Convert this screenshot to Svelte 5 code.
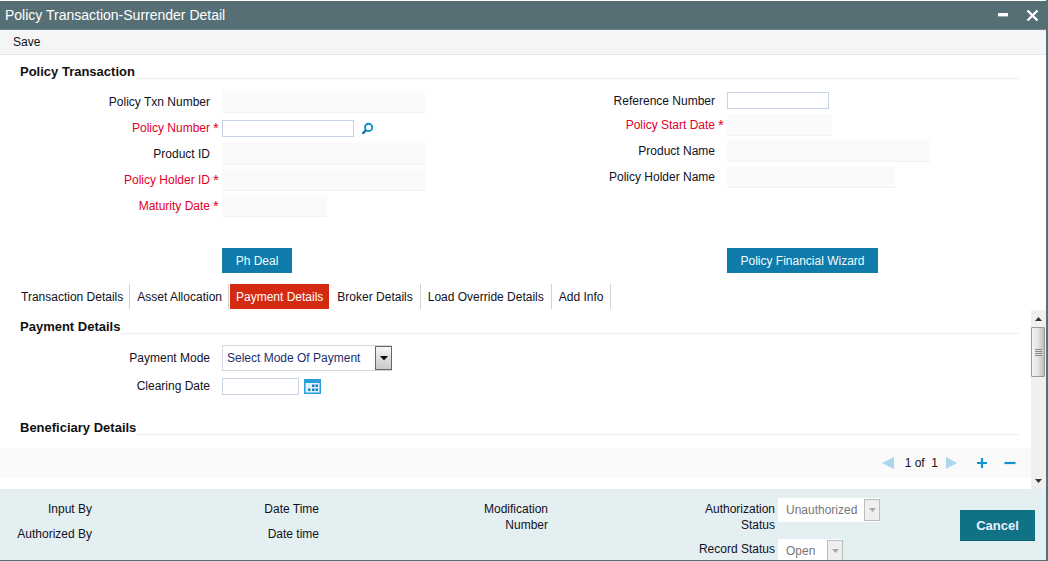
<script>
  const leftRows = [
    { label: 'Policy Txn Number', kind: 'ro', w: 'w202', h: 'r26' },
    { label: 'Policy Number', req: true, kind: 'lookup', h: 'r26' },
    { label: 'Product ID', kind: 'ro', w: 'w202', h: 'r26' },
    { label: 'Policy Holder ID', req: true, kind: 'ro', w: 'w202', h: 'r26' },
    { label: 'Maturity Date', req: true, kind: 'ro', w: 'w104', h: 'r26' }
  ];
  const rightRows = [
    { label: 'Reference Number', kind: 'input', h: 'r23' },
    { label: 'Policy Start Date', req: true, kind: 'ro', w: 'w104', h: 'r26' },
    { label: 'Product Name', kind: 'ro', w: 'w202', h: 'r26' },
    { label: 'Policy Holder Name', kind: 'ro', w: 'w167', h: 'r26' }
  ];
  const tabs = ['Transaction Details', 'Asset Allocation', 'Payment Details', 'Broker Details', 'Load Override Details', 'Add Info'];
</script>

<div class="window">
  <header class="title">
    <span>Policy Transaction-Surrender Detail</span>
    <div class="winbtns">
      <svg width="10" height="4" viewBox="0 0 10 4"><rect width="10" height="3.4" fill="#fff" /></svg>
      <svg width="13" height="13" viewBox="0 0 13 13"><path d="M1.5 1.5l10 10M11.5 1.5l-10 10" stroke="#fff" stroke-width="2.4" /></svg>
    </div>
  </header>
  <div class="toolbar"><span class="save">Save</span></div>

  <main class="main">
    <div class="section first"><h2>Policy Transaction</h2><i></i></div>
    <div class="columns">
      <div class="col left">
        {#each leftRows as r}
          <div class="row {r.h}">
            <label class="lbl" class:red={r.req}>{r.label}</label>
            <span class="star">{r.req ? '*' : ''}</span>
            {#if r.kind === 'ro'}
              <span class="ro {r.w}"></span>
            {:else}
              <span class="inp w132"></span>
              <svg class="lens" width="13" height="13" viewBox="0 0 13 13"><circle cx="7.6" cy="5.4" r="3.6" fill="none" stroke="#0f8fc7" stroke-width="1.9" /><path d="M5 8.2L1.5 11.8" stroke="#0b6f9f" stroke-width="2.2" /></svg>
            {/if}
          </div>
        {/each}
      </div>
      <div class="col right">
        {#each rightRows as r}
          <div class="row {r.h}">
            <label class="lbl" class:red={r.req}>{r.label}</label>
            <span class="star">{r.req ? '*' : ''}</span>
            {#if r.kind === 'ro'}
              <span class="ro {r.w}"></span>
            {:else}
              <span class="inp w102"></span>
            {/if}
          </div>
        {/each}
      </div>
    </div>

    <div class="actions">
      <div class="actcol a1"><button class="blue b1">Ph Deal</button></div>
      <div class="actcol a2"><button class="blue b2">Policy Financial Wizard</button></div>
    </div>

    <nav class="tabs">
      {#each tabs as t}
        <span class="tab" class:active={t === 'Payment Details'}>{t}</span>
      {/each}
    </nav>

    <div class="scroller">
      <div class="content">
        <div class="section"><h2>Payment Details</h2><i></i></div>
        <div class="row r28 pm">
          <label class="lbl">Payment Mode</label>
          <span class="star"></span>
          <span class="select">
            <span class="val">Select Mode Of Payment</span>
            <span class="arrow"><svg width="8" height="5" viewBox="0 0 8 5"><path d="M0 0h8L4 4.500z" fill="#111" /></svg></span>
          </span>
        </div>
        <div class="row r28">
          <label class="lbl">Clearing Date</label>
          <span class="star"></span>
          <span class="inp w77"></span>
          <svg class="cal" width="17" height="15" viewBox="0 0 17 15"><rect width="17" height="15" fill="#2a9fdc" /><rect x="1.500" y="4" width="14" height="9.500" fill="#dff1fb" /><g fill="#1a7fb8"><rect x="8" y="5.500" width="2.500" height="2.500" /><rect x="11.500" y="5.500" width="2.500" height="2.500" /><rect x="4" y="9.500" width="2.500" height="2.500" /><rect x="8" y="9.500" width="2.500" height="2.500" /><rect x="11.500" y="9.500" width="2.500" height="2.500" /></g></svg>
        </div>
        <div class="section ben"><h2>Beneficiary Details</h2><i></i></div>
        <div class="pager">
          <svg width="13" height="12" viewBox="0 0 13 12"><path d="M12 0v12L0 6z" fill="#a9d8ee" /></svg>
          <span class="count">1 of &nbsp;1</span>
          <svg width="11" height="12" viewBox="0 0 11 12"><path d="M0 0v12L11 6z" fill="#a9d8ee" /></svg>
          <svg class="plus" width="12" height="12" viewBox="0 0 12 12"><path d="M6 1v10M1 6h10" stroke="#0f94d2" stroke-width="2.200" /></svg>
          <svg class="minus" width="12" height="12" viewBox="0 0 12 12"><path d="M0.500 6h11" stroke="#0f94d2" stroke-width="2.200" /></svg>
        </div>
      </div>
      <div class="scrollbar">
        <span class="sbtn"><svg width="7" height="4" viewBox="0 0 7 4"><path d="M3.500 0L7 4H0z" fill="#333" /></svg></span>
        <span class="thumb"><svg width="7" height="7" viewBox="0 0 7 7"><path d="M0 .500h7M0 2.500h7M0 4.500h7M0 6.500h7" stroke="#888" /></svg></span>
        <span class="track"></span>
        <span class="sbtn"><svg width="7" height="4" viewBox="0 0 7 4"><path d="M0 0h7L3.500 4z" fill="#333" /></svg></span>
      </div>
    </div>
  </main>

  <footer class="footer">
    <div class="fcol c1"><span>Input By</span><span>Authorized By</span></div>
    <div class="fcol c2"><span>Date Time</span><span>Date time</span></div>
    <div class="fcol c3"><span class="two">Modification<br />Number</span></div>
    <div class="status">
      <div class="srow s1">
        <span class="slabel">Authorization<br />Status</span>
        <span class="fsel u"><span>Unauthorized</span><b><svg width="7" height="4" viewBox="0 0 7 4"><path d="M0 0h7L3.500 4z" fill="#aaa" /></svg></b></span>
      </div>
      <div class="srow s2">
        <span class="slabel">Record Status</span>
        <span class="fsel o"><span>Open</span><b><svg width="7" height="4" viewBox="0 0 7 4"><path d="M0 0h7L3.500 4z" fill="#aaa" /></svg></b></span>
      </div>
    </div>
    <button class="cancel">Cancel</button>
  </footer>
</div>

<style>
  :global(body) { margin: 0; background: #fff; }
  .window {
    width: 1048px; height: 561px; box-sizing: border-box; overflow: hidden;
    display: flex; flex-direction: column; padding-top: 1px;
    border-right: 2px solid #53707a; border-bottom: 1px solid #53707a;
    background: #fff; color: #111122;
    font: 12px/14px "Liberation Sans", Arial, sans-serif;
  }
  .title {
    height: 28px; flex: none; background: #566f75; color: #fff;
    display: flex; align-items: center; justify-content: space-between;
    padding: 0 7px 0 5px; font-size: 14px;
    border-bottom: 1px solid #6d8a90;
  }
  .winbtns { display: flex; align-items: center; gap: 18px; }
  .toolbar {
    height: 25px; flex: none; box-sizing: border-box; background: #f4f5f7;
    border-bottom: 1px solid #e3e6e8; display: flex; align-items: center;
    padding-left: 13px; color: #111;
  }
  .main { flex: 1; min-height: 0; display: flex; flex-direction: column; }
  .section { display: flex; align-items: flex-end; padding-left: 20px; padding-right: 26px; }
  .section h2 { margin: 0; font-size: 13px; line-height: 15px; font-weight: 700; color: #111; }
  .section i { flex: 1; border-bottom: 1px solid #eceef0; margin-bottom: 0; }
  .section.first { margin-top: 9px; }
  .columns { display: flex; margin-top: 10px; height: 135px; }
  .col { display: flex; flex-direction: column; }
  .col.left { width: 505px; }
  .row { display: flex; align-items: center; }
  .r26 { height: 26px; }
  .r23 { height: 23px; }
  .r28 { height: 28px; }
  .lbl { width: 210px; text-align: right; }
  .col.right .lbl { width: 210px; }
  .red { color: #e0002a; }
  .star { width: 12px; padding-left: 3px; box-sizing: border-box; color: #e0002a; font-size: 15px; line-height: 10px; align-self: flex-start; padding-top: 8px; }
  .col.right .star { width: 12px; }
  .ro { height: 22px; background: #fafafa; border-bottom: 1px solid #f2f2f2; box-sizing: border-box; }
  .w202 { width: 203px; }
  .w167 { width: 168px; }
  .w104 { width: 105px; }
  .inp { height: 17px; box-sizing: border-box; background: #fff; border: 1px solid #c6d4e6; }
  .w132 { width: 132px; }
  .w102 { width: 102px; }
  .w77 { width: 77px; }
  .lens { margin-left: 7px; }
  .cal { margin-left: 5px; }
  .actions { display: flex; margin-top: 24px; height: 26px; flex: none; }
  .actcol.a1 { width: 505px; padding-left: 222px; box-sizing: border-box; }
  .actcol.a2 { padding-left: 222px; }
  .blue {
    height: 25px; border: 0; padding: 0; background: #0f7bab; color: #f4fbff;
    font: 12px "Liberation Sans", Arial, sans-serif;
  }
  .b1 { width: 70px; }
  .b2 { width: 151px; }
  .tabs { display: flex; margin-top: 10px; padding-left: 14px; height: 26px; flex: none; }
  .tab { height: 25px; line-height: 27px; padding: 0 7px; border-right: 1px solid #d2d2d2; }
  .tab:nth-child(1) { padding-right: 6px; }
  .tab:nth-child(2) { padding-right: 6px; margin-right: 0; }
  .tab.active { background: #d42a12; color: #fff; border-right: 0; margin-left: 1px; padding: 0 6px; }
  .tab:nth-child(4) { padding: 0 7px 0 8px; }
  .scroller { flex: 1; min-height: 0; display: flex; }
  .content { flex: 1; display: flex; flex-direction: column; position: relative; }
  .content .section { padding-right: 12px; }
  .content .section:first-child { margin-top: 9px; }
  .pm { margin-top: 10px; }
  .pm + .row { margin-top: 0; }
  .select {
    display: flex; width: 170px; height: 26px; box-sizing: border-box;
    border: 1px solid #d3d7dc; align-items: center; color: #1a2f70; padding-left: 4px;
    position: relative; background: #fff;
  }
  .select .val { flex: 1; white-space: nowrap; }
  .arrow {
    position: absolute; right: -1px; top: 0; width: 17px; height: 24px; box-sizing: border-box;
    border: 1px solid #666; background: linear-gradient(#f6f6f6, #c9c9c9);
    display: flex; align-items: center; justify-content: center;
  }
  .ben { margin-top: 20px; }
  .pager {
    height: 30px; flex: none; margin-top: 13px; background: #fafafa; display: flex; align-items: center;
    justify-content: flex-end; padding-right: 15px; color: #111;
  }
  .count { margin: 0 8px 0 10px; white-space: nowrap; }
  .plus { margin-left: 19px; }
  .minus { margin-left: 16px; }
  .scrollbar { width: 15px; flex: none; display: flex; flex-direction: column; background: #f0f0f0; margin-right: 0; }
  .sbtn { height: 17px; flex: none; display: flex; align-items: center; justify-content: center; }
  .thumb {
    height: 50px; flex: none; box-sizing: border-box; margin-right: 1px; width: 14px;
    border: 1px solid #9a9a9a; border-radius: 1px;
    background: linear-gradient(90deg, #f4f4f4, #e4e4e4 50%, #bdbdbd);
    display: flex; align-items: center; justify-content: center;
  }
  .track { flex: 1; }
  .footer {
    height: 71px; flex: none; background: #e4eff2; position: relative; display: flex;
  }
  .fcol { display: flex; flex-direction: column; align-items: flex-end; padding-top: 13px; gap: 11px; white-space: nowrap; box-sizing: border-box; }
  .fcol span { display: block; text-align: right; }
  .c1 { width: 92px; }
  .c2 { width: 227px; }
  .c3 { width: 229px; }
  .two { line-height: 16px; margin-top: -1px; }
  .status { width: 332px; display: flex; flex-direction: column; }
  .srow { display: flex; align-items: flex-start; }
  .slabel { width: 227px; text-align: right; line-height: 16px; white-space: nowrap; }
  .s1 { padding-top: 12px; height: 35px; }
  .s1 .slabel, .s2 .slabel { flex: none; }
  .s2 { margin-top: 8px; }
  .fsel {
    display: flex; position: relative; margin-left: 3px; background: #fff; color: #777; align-items: center;
    padding-left: 8px; box-sizing: border-box; height: 24px; margin-top: -3px;
  }
  .fsel.u { width: 102px; }
  .fsel.o { width: 65px; margin-top: -2px; }
  .fsel b {
    position: absolute; right: 0; top: 1px; width: 16px; height: 22px; box-sizing: border-box; background: #efefef;
    border: 1px solid #bdbdbd; display: flex; align-items: center; justify-content: center;
  }
  .cancel {
    margin-left: 0; margin-top: 21px; width: 75px; height: 31px; border: 0; padding: 0;
    background: #0f7385; color: #eef; font: 700 13px "Liberation Sans", Arial, sans-serif;
    border-bottom: 1px solid #0c6272; position: absolute; left: 960px;
  }
</style>
